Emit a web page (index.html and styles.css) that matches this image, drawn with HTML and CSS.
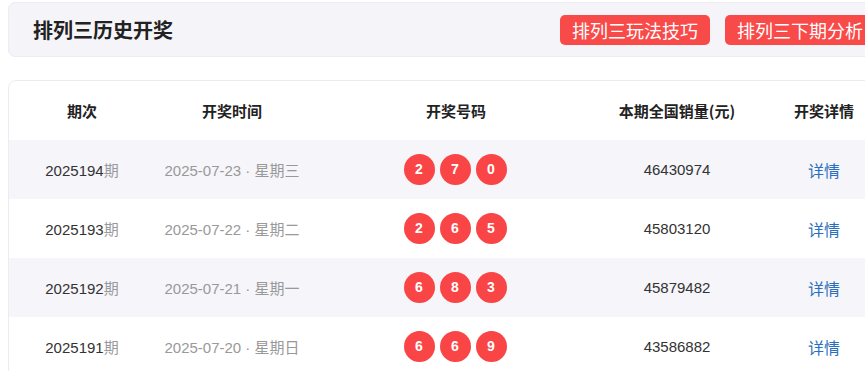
FILE: index.html
```html
<!DOCTYPE html>
<html lang="zh-CN">
<head>
<meta charset="utf-8">
<title>排列三历史开奖</title>
<link rel="stylesheet" href="styles.css">
</head>
<body>
<div class="page">
  <div class="topbar">
    <h1 class="title">排列三历史开奖</h1>
    <div class="actions">
      <a class="btn">排列三玩法技巧</a>
      <a class="btn">排列三下期分析</a>
    </div>
  </div>
  <div class="card">
    <table class="draws">
      <colgroup>
        <col class="c1"><col class="c2"><col class="c3"><col class="c4"><col class="c5">
      </colgroup>
      <thead>
        <tr><th>期次</th><th>开奖时间</th><th>开奖号码</th><th>本期全国销量(元)</th><th>开奖详情</th></tr>
      </thead>
      <tbody>
        <tr class="alt">
          <td>2025194<span class="muted">期</span></td>
          <td class="date">2025-07-23 · 星期三</td>
          <td><div class="balls"><span class="ball">2</span><span class="ball">7</span><span class="ball">0</span></div></td>
          <td>46430974</td>
          <td><a class="link">详情</a></td>
        </tr>
        <tr>
          <td>2025193<span class="muted">期</span></td>
          <td class="date">2025-07-22 · 星期二</td>
          <td><div class="balls"><span class="ball">2</span><span class="ball">6</span><span class="ball">5</span></div></td>
          <td>45803120</td>
          <td><a class="link">详情</a></td>
        </tr>
        <tr class="alt">
          <td>2025192<span class="muted">期</span></td>
          <td class="date">2025-07-21 · 星期一</td>
          <td><div class="balls"><span class="ball">6</span><span class="ball">8</span><span class="ball">3</span></div></td>
          <td>45879482</td>
          <td><a class="link">详情</a></td>
        </tr>
        <tr>
          <td>2025191<span class="muted">期</span></td>
          <td class="date">2025-07-20 · 星期日</td>
          <td><div class="balls"><span class="ball">6</span><span class="ball">6</span><span class="ball">9</span></div></td>
          <td>43586882</td>
          <td><a class="link">详情</a></td>
        </tr>
      </tbody>
    </table>
  </div>
</div>
</body>
</html>
```

FILE: styles.css
```css
html, body {
  margin: 0;
  padding: 0;
  overflow: hidden;
  background: #fff;
}
body {
  font-family: "Liberation Sans", "Noto Sans CJK SC", sans-serif;
  color: #333;
}
.page {
  padding: 2px 0 0 8px;
  width: 890px;
}
.topbar {
  box-sizing: border-box;
  width: 890px;
  height: 55px;
  display: flex;
  align-items: center;
  justify-content: space-between;
  padding: 0 22px 0 24px;
  background: #f5f5f9;
  border: 1px solid #ededf1;
  border-radius: 7px;
}
.title {
  margin: 0;
  font-size: 20px;
  font-weight: bold;
  color: #222;
  font-family: "Noto Sans CJK SC", sans-serif;
}
.actions {
  display: flex;
  gap: 15px;
}
.btn {
  display: block;
  width: 150px;
  height: 30px;
  line-height: 30px;
  text-align: center;
  background: #f94a4a;
  color: #fff;
  font-size: 18px;
  border-radius: 5px;
  font-family: "Noto Sans CJK SC", sans-serif;
  margin-top: 1px;
}
.card {
  margin-top: 23px;
  width: 890px;
  box-sizing: border-box;
  border: 1px solid #ececf0;
  border-radius: 8px;
  overflow: hidden;
}
.draws {
  width: 888px;
  border-collapse: collapse;
  table-layout: fixed;
}
.c1 { width: 146px; }
.c2 { width: 154px; }
.c3 { width: 294px; }
.c4 { width: 148px; }
.c5 { width: 146px; }
.draws th {
  height: 59px;
  padding: 0;
  font-size: 15px;
  font-weight: bold;
  color: #222;
  text-align: center;
  font-family: "Noto Sans CJK SC", sans-serif;
}
.draws td {
  height: 59px;
  padding: 0;
  font-size: 15px;
  text-align: center;
  color: #333;
}
.draws tr.alt td {
  background: #f5f5fa;
}
.muted {
  color: #999;
}
.draws td.date {
  color: #999;
}
.balls {
  display: flex;
  justify-content: center;
  gap: 5px;
  padding-right: 2px;
}
.ball {
  width: 31px;
  height: 31px;
  border-radius: 50%;
  background: #f94545;
  color: #fff;
  font-weight: bold;
  font-size: 14px;
  line-height: 31px;
  text-align: center;
}
.link {
  color: #2a6fbd;
  font-size: 16px;
}
```
